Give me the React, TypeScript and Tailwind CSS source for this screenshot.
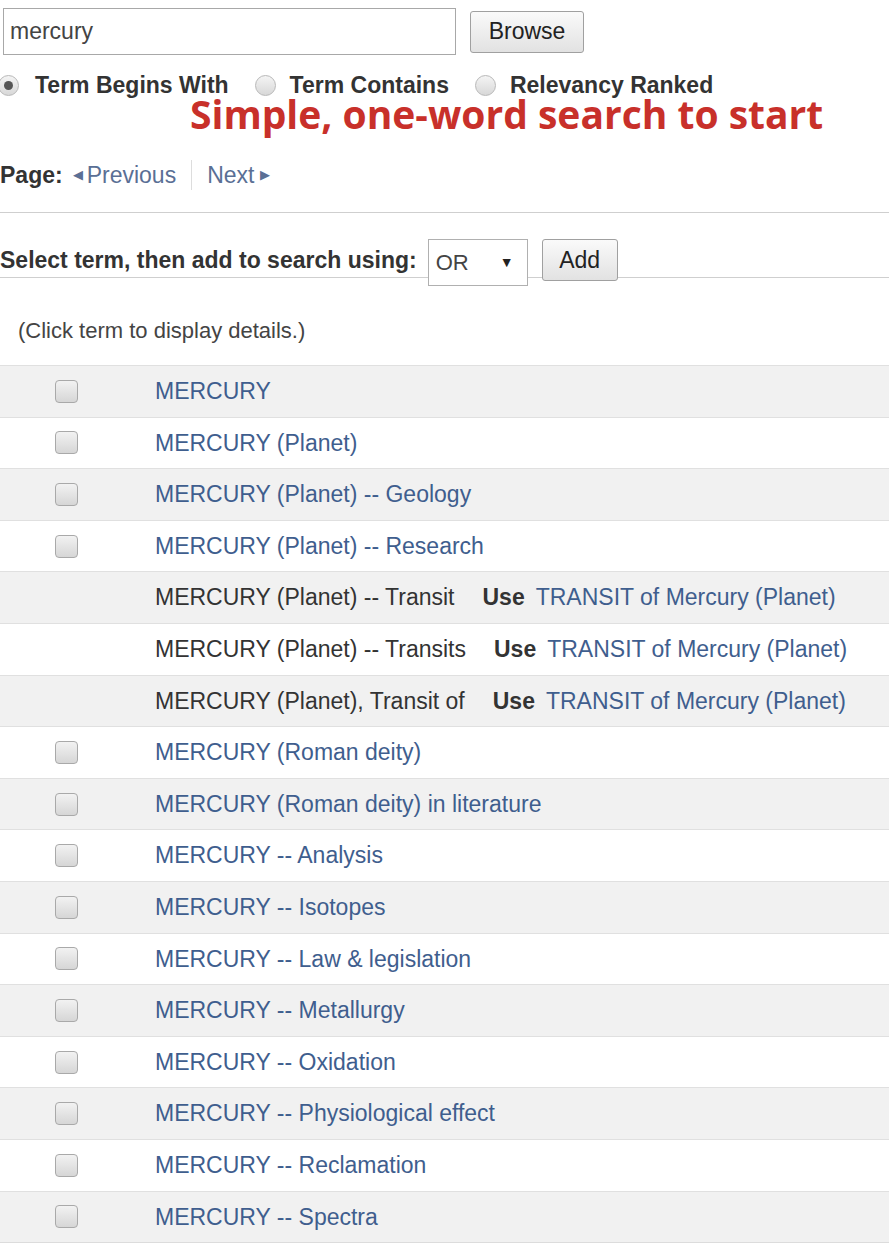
import React from "react";

type Term = {
  label: string;
  check?: boolean;
  use?: string;
};

const TERMS: Term[] = [
  { label: "MERCURY", check: true },
  { label: "MERCURY (Planet)", check: true },
  { label: "MERCURY (Planet) -- Geology", check: true },
  { label: "MERCURY (Planet) -- Research", check: true },
  { label: "MERCURY (Planet) -- Transit", use: "TRANSIT of Mercury (Planet)" },
  { label: "MERCURY (Planet) -- Transits", use: "TRANSIT of Mercury (Planet)" },
  { label: "MERCURY (Planet), Transit of", use: "TRANSIT of Mercury (Planet)" },
  { label: "MERCURY (Roman deity)", check: true },
  { label: "MERCURY (Roman deity) in literature", check: true },
  { label: "MERCURY -- Analysis", check: true },
  { label: "MERCURY -- Isotopes", check: true },
  { label: "MERCURY -- Law & legislation", check: true },
  { label: "MERCURY -- Metallurgy", check: true },
  { label: "MERCURY -- Oxidation", check: true },
  { label: "MERCURY -- Physiological effect", check: true },
  { label: "MERCURY -- Reclamation", check: true },
  { label: "MERCURY -- Spectra", check: true },
];

function Radio({ on }: { on?: boolean }) {
  return (
    <span className="w-[21px] h-[21px] rounded-full border border-[#b8b8b8] bg-gradient-to-b from-[#f4f4f4] to-[#d8d8d8] flex items-center justify-center shrink-0">
      {on && <span className="w-[9px] h-[9px] rounded-full bg-[#555]" />}
    </span>
  );
}

function Checkbox() {
  return (
    <span className="block w-[23px] h-[23px] rounded-[4px] border border-[#a9a9a9] bg-gradient-to-b from-[#f2f2f2] to-[#d6d6d6]" />
  );
}

export default function App() {
  return (
    <div className="w-[889px] min-h-[1245px] bg-white text-[#333] font-['Liberation_Sans',Arial,sans-serif] overflow-hidden">
      {/* search box */}
      <div className="flex items-center pt-[8px] pl-[3px] gap-[14px]">
        <div className="w-[453px] h-[47px] border border-[#a8a8a8] bg-white flex items-center px-[6px] text-[23px] text-[#444]">
          mercury
        </div>
        <button className="w-[114px] h-[42px] border border-[#a0a0a0] rounded-[3px] bg-gradient-to-b from-[#fafafa] to-[#e2e2e2] text-[23px] text-[#222]">
          Browse
        </button>
      </div>

      {/* radios */}
      <div className="flex items-center mt-[18px] text-[23px] font-bold text-[#333] h-[24px] leading-[24px]">
        <span className="-ml-[2px]"><Radio on /></span>
        <span className="ml-[16px]">Term Begins With</span>
        <span className="ml-[26px]"><Radio /></span>
        <span className="ml-[14px]">Term Contains</span>
        <span className="ml-[26px]"><Radio /></span>
        <span className="ml-[14px]">Relevancy Ranked</span>
      </div>

      {/* annotation */}
      <div className="h-[32px] mt-[1px] pl-[190px] whitespace-nowrap">
        <span className="text-[39px] leading-[32px] font-bold text-[#c8302a] font-['Open_Sans',sans-serif]">
          Simple, one-word search to start
        </span>
      </div>

      {/* paging */}
      <div className="flex items-center mt-[30px] h-[30px] text-[23px]">
        <span className="font-bold text-[#333]">Page:</span>
        <span className="ml-[10px] text-[#5a6f95] text-[13px]">◀</span>
        <span className="ml-[4px] text-[#5a6f95]">Previous</span>
        <span className="mx-[15px] w-px h-[30px] bg-[#ddd]" />
        <span className="text-[#5a6f95]">Next</span>
        <span className="ml-[6px] text-[#5a6f95] text-[13px]">▶</span>
      </div>

      <div className="mt-[22px] border-t border-[#cfcfcf]" />

      {/* select bar */}
      <div className="relative mt-[23px] h-[48px]">
        <div className="absolute left-0 right-0 top-[41px] border-t border-[#cfcfcf]" />
        <div className="relative flex items-center h-full">
          <span className="font-bold text-[23px] text-[#333]">Select term, then add to search using:</span>
          <div className="ml-[11px] w-[100px] h-[47px] border border-[#b0b0b0] bg-white flex items-center justify-between px-[7px] text-[22px] text-[#444] mt-[5px]">
            <span>OR</span>
            <span className="text-[14px] text-[#222] mr-[6px]">▼</span>
          </div>
          <button className="ml-[14px] w-[76px] h-[42px] border border-[#a0a0a0] rounded-[3px] bg-gradient-to-b from-[#fafafa] to-[#e2e2e2] text-[23px] text-[#222]">
            Add
          </button>
        </div>
      </div>

      <div className="mt-[33px] pl-[18px] text-[22px] text-[#444] h-[28px] leading-[28px]">
        (Click term to display details.)
      </div>

      {/* terms */}
      <div className="mt-[20px] border-b border-[#dcdcdc]">
        {TERMS.map((t, i) => (
          <div
            key={i}
            className={`flex items-center h-[51.6px] border-t border-[#e0e0e0] text-[23px] ${i % 2 === 0 ? "bg-[#f1f1f1]" : "bg-white"}`}
          >
            <div className="w-[155px] shrink-0 pl-[55px]">{t.check && <Checkbox />}</div>
            {t.use ? (
              <div className="flex items-center whitespace-nowrap">
                <span className="text-[#333]">{t.label}</span>
                <span className="ml-[28px] font-bold text-[#333]">Use</span>
                <span className="ml-[11px] text-[#3f5e8e]">{t.use}</span>
              </div>
            ) : (
              <span className="text-[#3f5e8e] whitespace-nowrap">{t.label}</span>
            )}
          </div>
        ))}
      </div>
    </div>
  );
}
